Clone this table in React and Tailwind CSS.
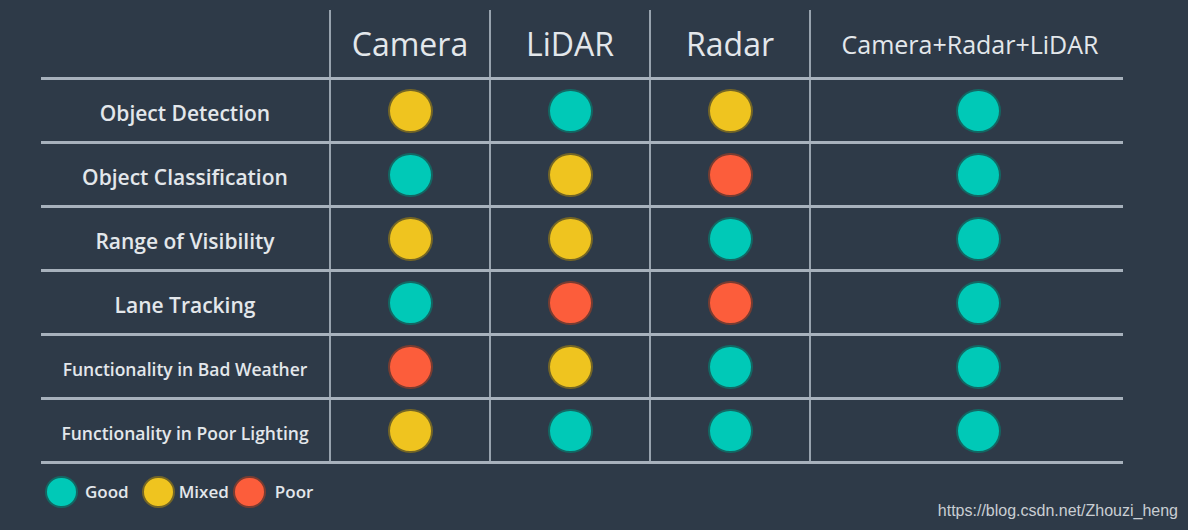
const COLORS = {
  good: "bg-[#00c9b7]",
  mixed: "bg-[#efc41f]",
  poor: "bg-[#fc5d3b]",
};

const rows = [
  { label: "Object Detection", small: false, v: ["mixed", "good", "mixed", "good"] },
  { label: "Object Classification", small: false, v: ["good", "mixed", "poor", "good"] },
  { label: "Range of Visibility", small: false, v: ["mixed", "mixed", "good", "good"] },
  { label: "Lane Tracking", small: false, v: ["good", "poor", "poor", "good"] },
  { label: "Functionality in Bad Weather", small: true, v: ["poor", "mixed", "good", "good"] },
  { label: "Functionality in Poor Lighting", small: true, v: ["mixed", "good", "good", "good"] },
];

const Dot = ({ kind, size = "w-[45px] h-[44px]" }) => (
  <span className={`block rounded-full border-2 border-[#1f262c]/60 ${size} ${COLORS[kind]}`} />
);

const grid = "grid grid-cols-[288px_160px_160px_160px_314px]";
const cell = "flex items-center justify-center border-l-2 border-[#98a3ae]";

export default function App() {
  return (
    <div
      className="w-[1188px] h-[530px] bg-[#2e3a48] text-[#e3e7eb] overflow-hidden"
      style={{ fontFamily: '"Open Sans", "Noto Sans", sans-serif' }}
    >
      <div className="pt-[10px] pl-[41px] w-[1123px]">
        <div className={`${grid} h-[70px] border-b-[3px] border-[#a7b1bc]`}>
          <div />
          <div className={`${cell} text-[32px] font-medium`}>Camera</div>
          <div className={`${cell} text-[32px] font-medium`}>LiDAR</div>
          <div className={`${cell} text-[32px] font-medium`}>Radar</div>
          <div className={`${cell} text-[25px] font-medium pl-[6px] pt-[3px]`}>Camera+Radar+LiDAR</div>
        </div>
        {rows.map((r) => (
          <div key={r.label} className={`${grid} h-[64px] border-b-[3px] border-[#a7b1bc]`}>
            <div
              className={`flex items-center justify-center font-semibold pt-[6px] ${
                r.small ? "text-[17.5px]" : "text-[21px]"
              }`}
            >
              {r.label}
            </div>
            {r.v.map((k, i) => (
              <div key={i} className={`${cell} ${i === 3 ? "pl-[22px]" : ""}`}>
                <Dot kind={k} />
              </div>
            ))}
          </div>
        ))}
      </div>
      <div className="flex justify-between pl-[45px] pr-[10px]">
        <div className="flex items-center self-start mt-[12px] text-[17px] font-semibold">
          <Dot kind="good" size="w-[33px] h-[32px]" />
          <span className="ml-[7px] mr-[13px]">Good</span>
          <Dot kind="mixed" size="w-[33px] h-[32px]" />
          <span className="ml-[4px] mr-[4px]">Mixed</span>
          <Dot kind="poor" size="w-[33px] h-[32px]" />
          <span className="ml-[9px]">Poor</span>
        </div>
        <div
          className="self-start mt-[35px] text-[16px] text-[#c9ced3]"
          style={{ fontFamily: '"Liberation Sans", Arial, sans-serif' }}
        >
          https://blog.csdn.net/Zhouzi_heng
        </div>
      </div>
    </div>
  );
}
